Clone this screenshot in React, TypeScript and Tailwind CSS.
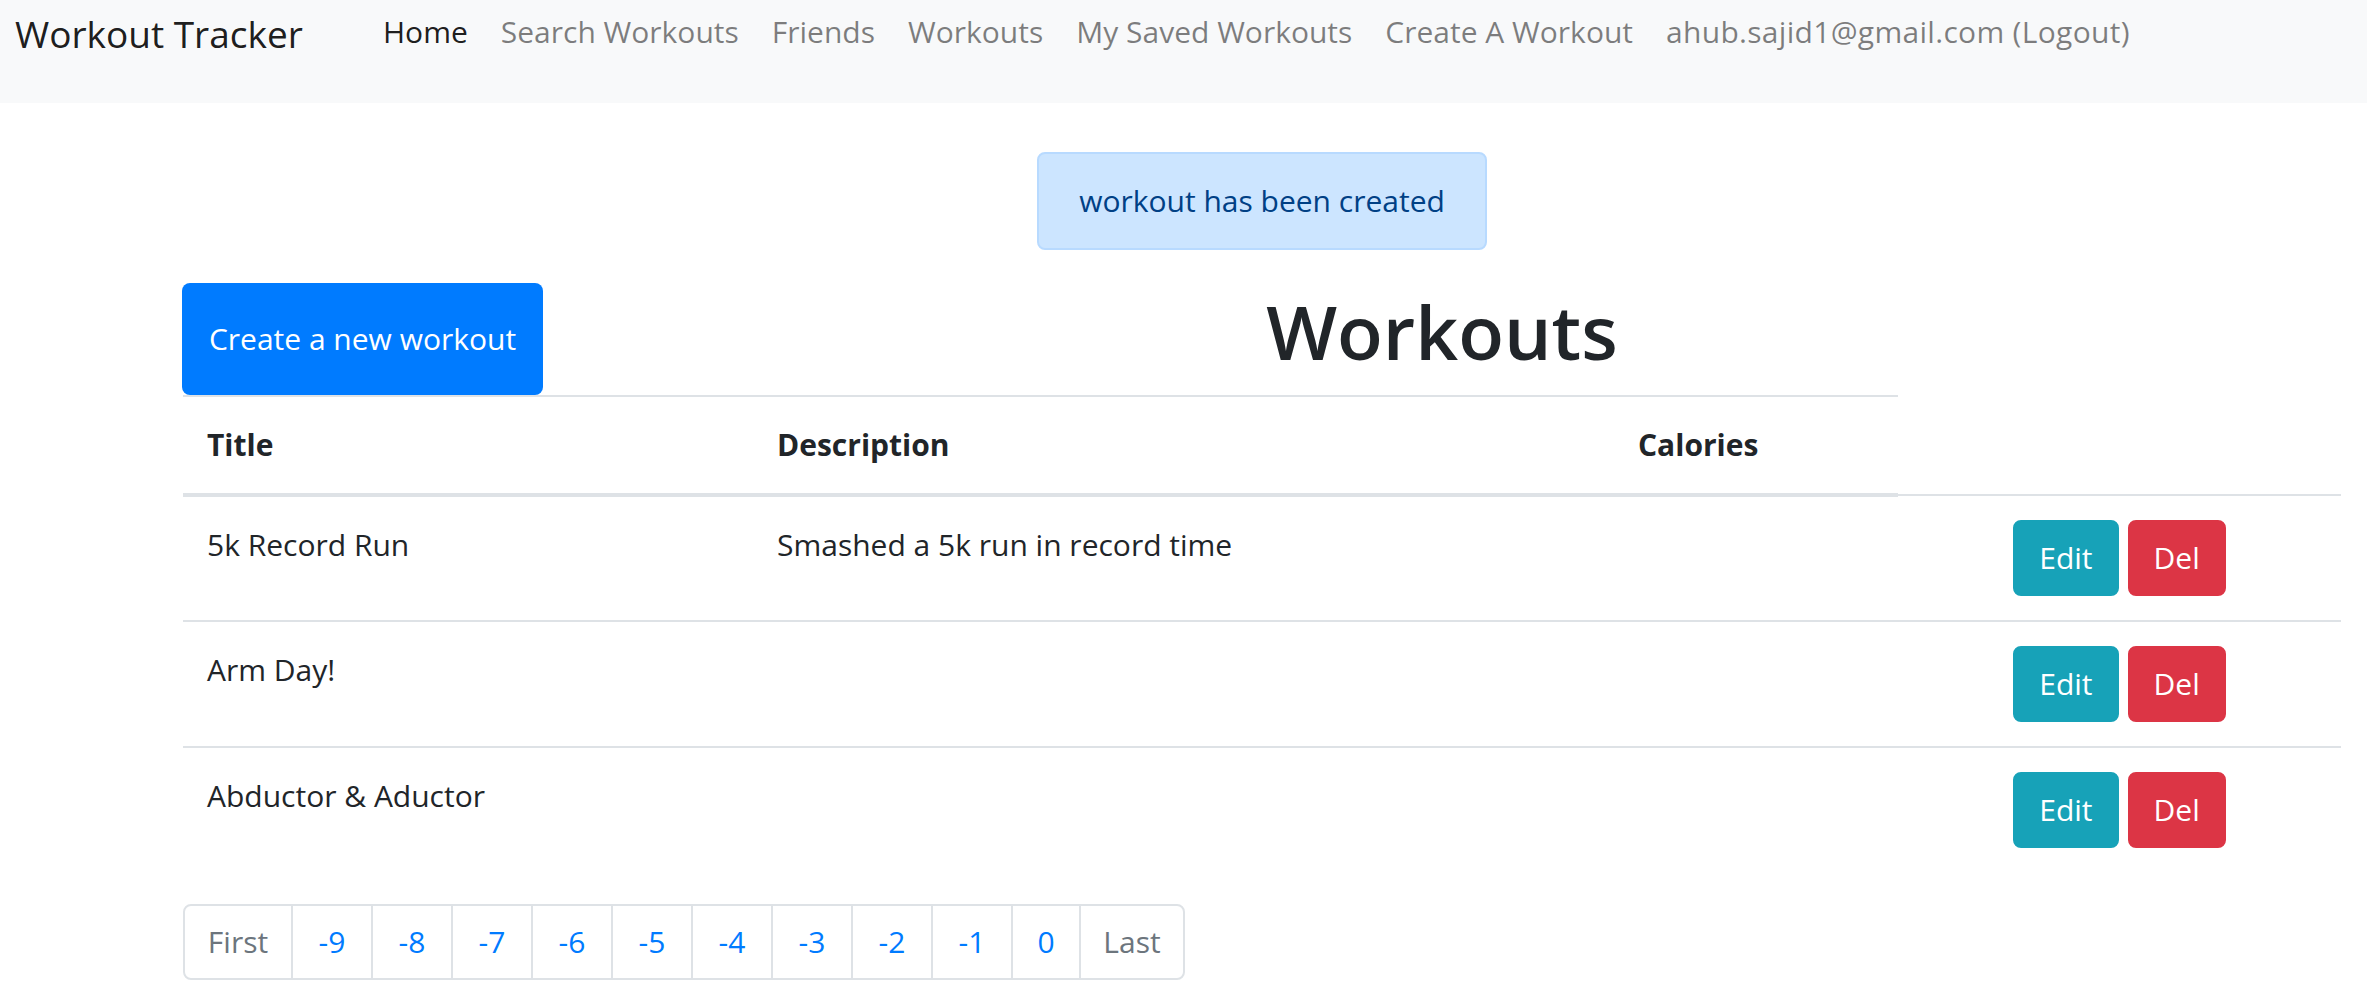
export default function App() {
  const links = [
    "Search Workouts",
    "Friends",
    "Workouts",
    "My Saved Workouts",
    "Create A Workout",
    "ahub.sajid1@gmail.com (Logout)",
  ];
  const rows = [
    { title: "5k Record Run", desc: "Smashed a 5k run in record time", cal: "" },
    { title: "Arm Day!", desc: "", cal: "" },
    { title: "Abductor & Aductor", desc: "", cal: "" },
  ];
  const pages = ["-9", "-8", "-7", "-6", "-5", "-4", "-3", "-2", "-1"];
  return (
    <div className="min-h-screen bg-white font-['Open_Sans',sans-serif] text-[#212529]">
      <nav className="flex h-[103px] items-start bg-[#f8f9fa]">
        <a className="ml-[15px] mt-[4px] w-[368px] shrink-0 text-[37px] leading-[60px] text-[rgba(0,0,0,0.9)]">
          Workout Tracker
        </a>
        <ul className="mt-[8px] flex gap-[33px] text-[30px] leading-[48px]">
          <li className="text-[rgba(0,0,0,0.9)]">Home</li>
          {links.map((l) => (
            <li
              key={l}
              className={
                l.startsWith("ahub")
                  ? "tracking-[0.3px] text-[rgba(0,0,0,0.5)]"
                  : "text-[rgba(0,0,0,0.5)]"
              }
            >
              {l}
            </li>
          ))}
        </ul>
      </nav>

      <main className="ml-[183px] w-[2158px]">
        <div className="mx-auto mb-[33px] mt-[49px] w-[450px] rounded-[8px] border-2 border-[#b8daff] bg-[#cce5ff] py-[23px] text-center text-[30px] leading-[48px] text-[#004085]">
          workout has been created
        </div>

        <div className="flex">
          <button className="-ml-[1px] w-[361px] shrink-0 rounded-[8px] bg-[#007bff] text-[30px] leading-[48px] text-white">
            Create a new workout
          </button>
          <h1 className="mb-[16px] flex-1 text-center text-[75px] font-semibold leading-[96px] text-[#212529]">
            Workouts
          </h1>
        </div>

        <table className="w-full table-fixed border-collapse text-[30px] leading-[48px]">
          <colgroup>
            <col className="w-[570px]" />
            <col className="w-[861px]" />
            <col className="w-[284px]" />
            <col className="w-[443px]" />
          </colgroup>
          <thead>
            <tr>
              {["Title", "Description", "Calories"].map((h) => (
                <th
                  key={h}
                  className="border-b-4 border-t-2 border-[#dee2e6] p-[24px] text-left align-bottom font-bold"
                >
                  {h}
                </th>
              ))}
            </tr>
          </thead>
          <tbody>
            {rows.map((r) => (
              <tr key={r.title}>
                <td className="border-t-2 border-[#dee2e6] p-[24px] align-top">{r.title}</td>
                <td className="border-t-2 border-[#dee2e6] p-[24px] align-top">{r.desc}</td>
                <td className="border-t-2 border-[#dee2e6] p-[24px] align-top">{r.cal}</td>
                <td className="border-t-2 border-[#dee2e6] p-[24px] align-top">
                  <div className="flex justify-center gap-[9px]">
                    <button className="rounded-[8px] border-2 border-[#17a2b8] bg-[#17a2b8] px-[24px] py-[12px] leading-[48px] text-white">
                      Edit
                    </button>
                    <button className="rounded-[8px] border-2 border-[#dc3545] bg-[#dc3545] px-[24px] py-[12px] leading-[48px] text-white">
                      Del
                    </button>
                  </div>
                </td>
              </tr>
            ))}
          </tbody>
        </table>

        <div className="mt-[32px] flex text-[30px] leading-[40px]">
          <span className="w-[110px] rounded-l-[8px] border-2 border-[#dee2e6] bg-white py-[16px] text-center text-[#6c757d]">
            First
          </span>
          {pages.map((p) => (
            <span
              key={p}
              className="-ml-[2px] w-[82px] border-2 border-[#dee2e6] bg-white py-[16px] text-center text-[#007bff]"
            >
              {p}
            </span>
          ))}
          <span className="-ml-[2px] w-[70px] border-2 border-[#dee2e6] bg-white py-[16px] text-center text-[#007bff]">
            0
          </span>
          <span className="-ml-[2px] w-[106px] rounded-r-[8px] border-2 border-[#dee2e6] bg-white py-[16px] text-center text-[#6c757d]">
            Last
          </span>
        </div>
      </main>
    </div>
  );
}
